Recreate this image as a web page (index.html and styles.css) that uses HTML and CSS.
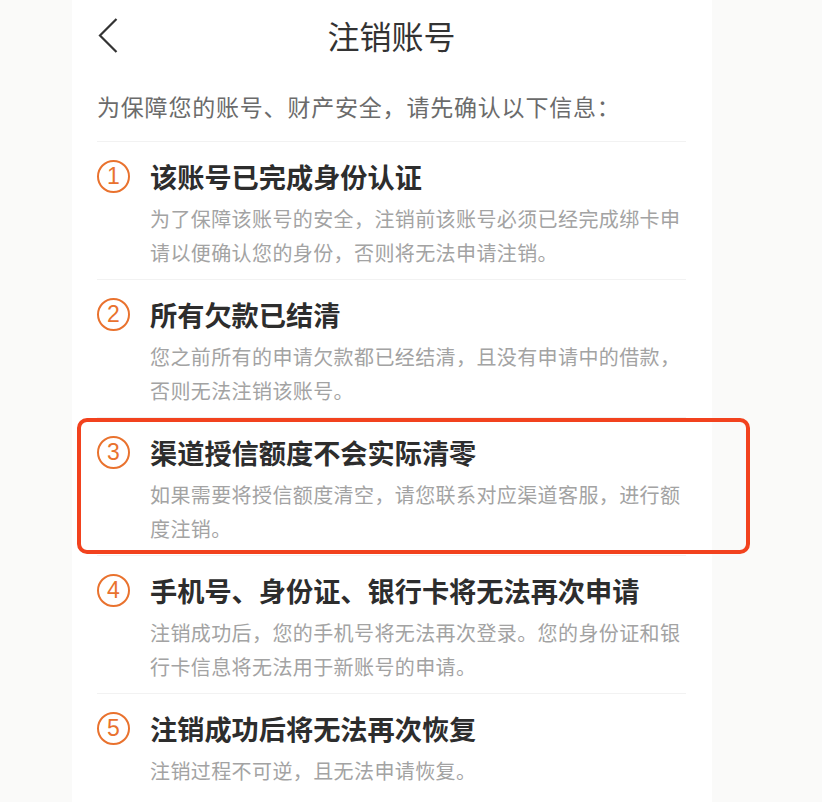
FILE: index.html
```html
<!DOCTYPE html>
<html lang="zh-CN">
<head>
<meta charset="utf-8">
<title>注销账号</title>
<link rel="stylesheet" href="styles.css">
</head>
<body>
<div class="card">
  <header class="header">
    <span class="back">
      <svg width="20" height="36" viewBox="0 0 20 36"><polyline points="18.5,1 2,17.5 18.5,34" fill="none" stroke="#333" stroke-width="2.2" stroke-linejoin="miter"/></svg>
    </span>
    <h1 class="title">注销账号</h1>
    <span></span>
  </header>
  <div class="content">
    <p class="intro">为保障您的账号、财产安全，请先确认以下信息：</p>
    <ul class="list">
      <li class="item">
        <div class="item-head"><span class="num">1</span><h2 class="item-title">该账号已完成身份认证</h2></div>
        <p class="desc">为了保障该账号的安全，注销前该账号必须已经完成绑卡申请以便确认您的身份，否则将无法申请注销。</p>
      </li>
      <li class="item">
        <div class="item-head"><span class="num">2</span><h2 class="item-title">所有欠款已结清</h2></div>
        <p class="desc">您之前所有的申请欠款都已经结清，且没有申请中的借款，否则无法注销该账号。</p>
      </li>
      <li class="item highlighted">
        <div class="item-head"><span class="num">3</span><h2 class="item-title">渠道授信额度不会实际清零</h2></div>
        <p class="desc">如果需要将授信额度清空，请您联系对应渠道客服，进行额度注销。</p>
        <span class="mark"></span>
      </li>
      <li class="item">
        <div class="item-head"><span class="num">4</span><h2 class="item-title">手机号、身份证、银行卡将无法再次申请</h2></div>
        <p class="desc">注销成功后，您的手机号将无法再次登录。您的身份证和银行卡信息将无法用于新账号的申请。</p>
      </li>
      <li class="item">
        <div class="item-head"><span class="num">5</span><h2 class="item-title">注销成功后将无法再次恢复</h2></div>
        <p class="desc">注销过程不可逆，且无法申请恢复。</p>
      </li>
    </ul>
  </div>
</div>
</body>
</html>
```
FILE: styles.css
```css
* { box-sizing: border-box; }
html, body {
  margin: 0;
  padding: 0;
  background: #fafaf9;
  font-family: "Noto Sans CJK SC", "Noto Sans", sans-serif;
}
.card {
  margin-left: 72px;
  width: 640px;
  min-height: 802px;
  background: #fff;
  padding: 0 26px 0 25px;
}
.header {
  height: 72px;
  display: grid;
  grid-template-columns: 1fr auto 1fr;
  align-items: center;
}
.back {
  display: flex;
  align-items: center;
  padding-left: 1px;
  padding-bottom: 1px;
}
.back svg { display: block; }
.title {
  margin: 0;
  font-size: 32px;
  font-weight: 400;
  color: #333;
  line-height: 40px;
  padding-bottom: 2px;
}
.intro {
  margin: 0;
  padding: 18px 0 19px;
  font-size: 23px;
  line-height: 32px;
  letter-spacing: 0.8px;
  color: #6b6b6b;
  border-bottom: 1px solid #f2f2f2;
  white-space: nowrap;
}
.list {
  list-style: none;
  margin: 0;
  padding: 0;
}
.item {
  position: relative;
  padding: 16px 0 9px;
  border-bottom: 1px solid #f2f2f2;
}
.item:last-child { border-bottom: none; }
.item-head {
  display: flex;
  align-items: center;
  gap: 20px;
}
.num {
  flex: none;
  width: 33px;
  height: 33px;
  border: 2px solid #e9722e;
  border-radius: 50%;
  color: #e9722e;
  font-family: "Liberation Sans", "Noto Sans", sans-serif;
  font-size: 23px;
  line-height: 29px;
  text-align: center;
}
.item-title {
  margin: 0;
  font-size: 27.2px;
  line-height: 36px;
  font-weight: 700;
  color: #2d2d2d;
}
.desc {
  margin: 8px 0 0 53px;
  font-size: 20px;
  line-height: 34px;
  letter-spacing: 0.4px;
  color: #a3a3a3;
}
.mark {
  position: absolute;
  top: 0;
  left: -20px;
  right: -64px;
  bottom: 1px;
  border: 4.5px solid #f2421e;
  border-radius: 10px;
  pointer-events: none;
}
```
